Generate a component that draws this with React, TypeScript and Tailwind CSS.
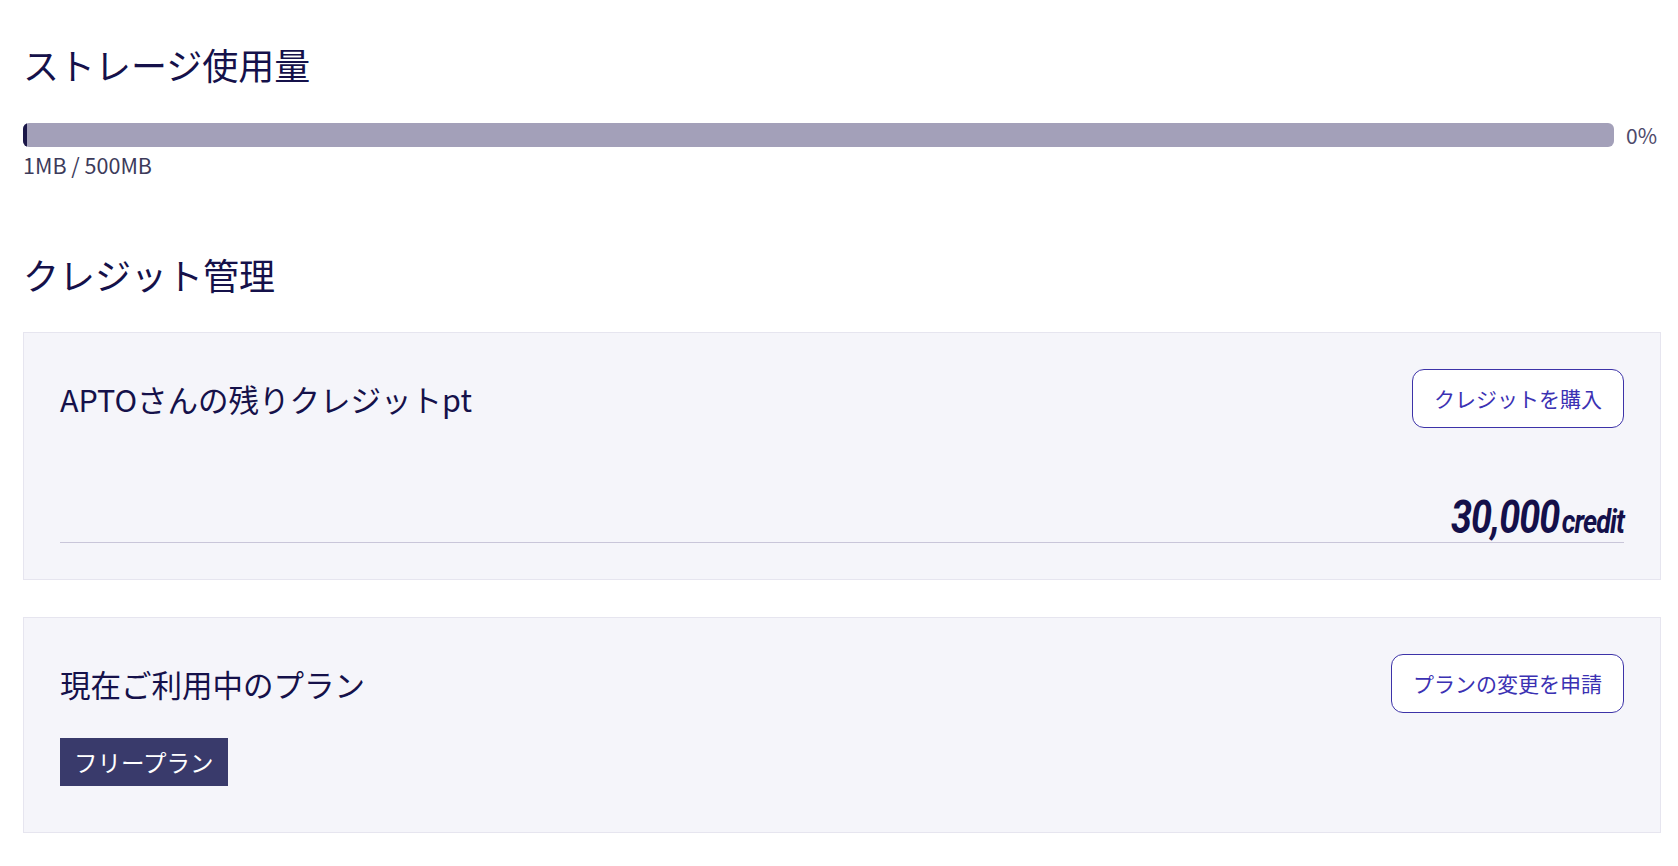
import React from 'react'

const StorageUsage: React.FC<{ used: number; total: number }> = ({ used, total }) => {
  const percent = Math.floor((used / total) * 100)
  return (
    <section>
      <h2 className="text-[36px] leading-[50px]">ストレージ使用量</h2>
      <div className="mt-[34px] flex items-center gap-3">
        <div className="h-6 flex-1 overflow-hidden rounded-md bg-[#a3a0b9]">
          <div className="h-full bg-[#1b1748]" style={{ width: `max(${percent}%, 4px)` }} />
        </div>
        <span className="mr-1 text-[21px] leading-6 text-[#4d4a6b]">{percent}%</span>
      </div>
      <p className="mt-[6px] text-[21.5px] leading-6 text-[#3c3a5a]">
        {used}MB / {total}MB
      </p>
    </section>
  )
}

const OutlineButton: React.FC<{ label: string }> = ({ label }) => (
  <button className="h-[59px] rounded-[12px] border border-[#3d33a8] bg-white px-[21px] text-[21px] text-[#3b31b3]">
    {label}
  </button>
)

const App: React.FC = () => {
  return (
    <div className="min-h-screen bg-white pl-[23px] pr-[17px] pt-[39px] font-['Noto_Sans_CJK_JP','Noto_Sans',sans-serif] text-[#15114a]">
      <StorageUsage used={1} total={500} />

      <h2 className="mt-[72px] text-[36px] leading-[50px]">クレジット管理</h2>

      <div className="mt-[33px] border border-[#e6e5ef] bg-[#f5f5fa] px-9 pt-9 pb-9">
        <div className="flex items-center justify-between">
          <h3 className="text-[30.5px] leading-10">APTOさんの残りクレジットpt</h3>
          <OutlineButton label="クレジットを購入" />
        </div>
        <div className="mt-[66px] flex items-baseline justify-end border-b border-[#c9c6d9] pb-[2px] font-['Roboto',sans-serif] font-bold italic text-[#14104a]">
          <span className="origin-right scale-x-[0.82] text-[46px] leading-none tracking-tight">
            30,000<span className="ml-[3px] text-[33px]">credit</span>
          </span>
        </div>
      </div>

      <div className="mt-[37px] border border-[#e6e5ef] bg-[#f5f5fa] px-9 pt-9 pb-[46px]">
        <div className="flex items-center justify-between">
          <h3 className="text-[30.5px] leading-10">現在ご利用中のプラン</h3>
          <OutlineButton label="プランの変更を申請" />
        </div>
        <span className="mt-[25px] inline-block h-12 bg-[#393a6b] px-[14px] text-[23.5px] leading-[48px] text-white">
          フリープラン
        </span>
      </div>
    </div>
  )
}

export default App
